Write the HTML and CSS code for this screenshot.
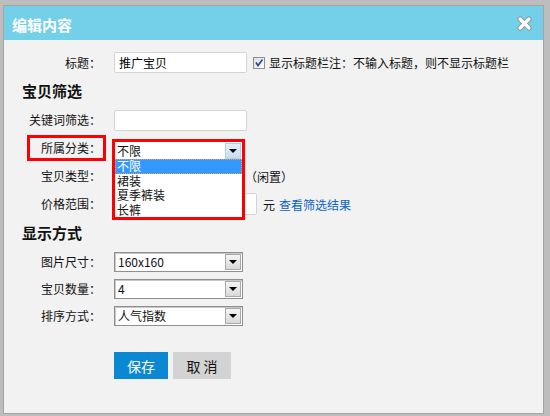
FILE: index.html
```html
<!DOCTYPE html>
<html lang="zh-CN">
<head>
<meta charset="utf-8">
<title>编辑内容</title>
<link rel="stylesheet" href="styles.css">
</head>
<body>
<div class="dialog">
    <div class="dialog-head">
        <span class="dialog-title">编辑内容</span>
        <svg class="close" width="15" height="15" viewBox="0 0 15 15">
            <path d="M3 3 L12 12 M12 3 L3 12" stroke="#8c8c8c" stroke-width="5" stroke-linecap="round"/>
            <path d="M3 3 L12 12 M12 3 L3 12" stroke="#ffffff" stroke-width="3.2" stroke-linecap="round"/>
        </svg>
    </div>
    <div class="dialog-body">
        <div class="row">
            <label class="label">标题：</label>
            <div class="field">
                <input class="text" type="text" value="推广宝贝">
                <svg class="check" width="12" height="12" viewBox="0 0 12 12">
                    <defs>
                        <linearGradient id="cb" x1="0" y1="0" x2="1" y2="1">
                            <stop offset="0" stop-color="#dcdcdc"/>
                            <stop offset="1" stop-color="#ffffff"/>
                        </linearGradient>
                    </defs>
                    <rect x="0.5" y="0.5" width="11" height="11" fill="url(#cb)" stroke="#8e8f8f"/>
                    <path d="M3 5.5 L5 8.5 L9.5 2.5" fill="none" stroke="#25439a" stroke-width="1.6"/>
                </svg>
                <span>显示标题栏注：不输入标题，则不显示标题栏</span>
            </div>
        </div>

        <h3 class="section">宝贝筛选</h3>
        <div class="row">
            <label class="label">关键词筛选：</label>
            <div class="field"><input class="text" type="text"></div>
        </div>
        <div class="row">
            <label class="label"><span class="mark">所属分类：</span></label>
            <div class="field field-open">
                <div class="dropdown">
                    <div class="dd-value">不限<span class="arrow arrow-hot"><i></i></span></div>
                    <ul class="dd-list">
                        <li class="active">不限</li>
                        <li>裙装</li>
                        <li>夏季裤装</li>
                        <li>长裤</li>
                    </ul>
                </div>
            </div>
        </div>
        <div class="row">
            <label class="label">宝贝类型：</label>
            <div class="field">
                <div class="select"><span class="value"></span><span class="arrow"><i></i></span></div>
                <span class="note">（闲置）</span>
            </div>
        </div>
        <div class="row">
            <label class="label">价格范围：</label>
            <div class="field">
                <input class="text price" type="text">
                <span class="dash"></span>
                <input class="text price price-to" type="text">
                <span class="unit">元</span>
                <a class="link" href="#">查看筛选结果</a>
            </div>
        </div>

        <h3 class="section">显示方式</h3>
        <div class="row row-sm">
            <label class="label">图片尺寸：</label>
            <div class="field">
                <div class="select"><span class="value">160x160</span><span class="arrow"><i></i></span></div>
            </div>
        </div>
        <div class="row row-sm">
            <label class="label">宝贝数量：</label>
            <div class="field">
                <div class="select"><span class="value">4</span><span class="arrow"><i></i></span></div>
            </div>
        </div>
        <div class="row row-sm">
            <label class="label">排序方式：</label>
            <div class="field">
                <div class="select"><span class="value">人气指数</span><span class="arrow"><i></i></span></div>
            </div>
        </div>

        <div class="actions">
            <button class="btn btn-primary">保存</button>
            <button class="btn">取 消</button>
        </div>
    </div>
</div>
</body>
</html>
```

FILE: styles.css
```css
* {
    margin: 0;
    padding: 0;
    box-sizing: border-box;
    font-family: "Noto Sans CJK SC", "Liberation Sans", sans-serif;
}

body {
    background: #bdbdbd;
    color: #111;
    font-size: 12px;
}

.dialog {
    width: 541px;
    height: 409px;
    margin: 5px 0 0 3px;
    border: 1px solid #a4a4a4;
    background: #f2f2f2;
}

.dialog-head {
    display: flex;
    align-items: center;
    justify-content: space-between;
    height: 34px;
    padding: 0 11px 0 8px;
    background: #74cfe8;
}

.dialog-title {
    color: #fff;
    font-size: 15px;
    font-weight: bold;
    padding-top: 2px;
}

.close {
    display: block;
    margin-top: 1px;
}

.dialog-body {
    padding-top: 9px;
}

.row {
    display: flex;
    align-items: center;
    height: 28px;
}

.row:first-child {
    height: 27px;
}

.row-sm {
    height: 27px;
}

.label {
    width: 97px;
    text-align: right;
    line-height: 16px;
}

.field {
    display: flex;
    align-items: center;
    margin-left: 13px;
    height: 100%;
    position: relative;
}

.mark {
    display: inline-block;
    border: 3px solid #ff0000;
    padding: 2px 2px 2px 11px;
    margin-right: -5px;
    line-height: 16px;
}

.text {
    width: 133px;
    height: 21px;
    border: 1px solid #d5d5d5;
    border-radius: 2px;
    background: #fff;
    padding: 0 4px;
    font-size: 12px;
    outline: none;
}

.check {
    display: block;
    margin: 0 4px 0 6px;
}

.section {
    height: 30px;
    line-height: 30px;
    padding-left: 18px;
    font-size: 15px;
    font-weight: bold;
}

.select {
    display: flex;
    align-items: center;
    width: 129px;
    height: 20px;
    border: 1px solid #8f8f8f;
    box-shadow: inset 1px 1px 0 #c8c8c8;
    background: #fff;
}

.select .value {
    flex: 1;
    padding-left: 3px;
    line-height: 16px;
}

.arrow {
    display: flex;
    align-items: center;
    justify-content: center;
    width: 16px;
    height: 16px;
    margin-right: 1px;
    border: 1px solid #a9a9a9;
    background: linear-gradient(#f4f4f4, #d9d9d9);
}

.arrow i {
    width: 0;
    height: 0;
    border-left: 4px solid transparent;
    border-right: 4px solid transparent;
    border-top: 4px solid #000;
}

.arrow-hot {
    border-color: #b7cde0;
    background: linear-gradient(#e6f1fb, #c6dcf0);
}

.note {
    margin-left: 2px;
}

.price {
    width: 60px;
    height: 22px;
}

.dash {
    width: 1px;
    height: 1px;
    margin: 0 7px;
    background: #666;
}

.price-to {
    width: 68px;
}

.unit {
    margin-left: 6px;
}

.link {
    margin-left: 4px;
    color: #0b62c4;
    text-decoration: none;
}

/* open category dropdown, drawn over the rows below */
.dropdown {
    position: absolute;
    left: -2px;
    top: 5px;
    width: 133px;
    border: 3px solid #ff0000;
    background: #fff;
    z-index: 2;
}

.dd-value {
    display: flex;
    align-items: center;
    justify-content: space-between;
    height: 17px;
    padding-left: 2px;
    line-height: 16px;
}

.dd-value .arrow {
    height: 16px;
}

.dd-list {
    list-style: none;
    height: 58px;
}

.dd-list li {
    height: 14.5px;
    line-height: 14px;
    padding-left: 2px;
}

.dd-list li.active {
    background: #3399ff;
    color: #fff;
    outline: 1px dotted #e8a060;
    outline-offset: -1px;
}

.actions {
    display: flex;
    gap: 5px;
    margin: 23px 0 0 110px;
}

.btn {
    width: 58px;
    height: 27px;
    border: none;
    background: #d3d3d3;
    color: #111;
    font-size: 14px;
    cursor: pointer;
}

.btn-primary {
    width: 54px;
    background: #0a88d1;
    color: #fff;
}
```
